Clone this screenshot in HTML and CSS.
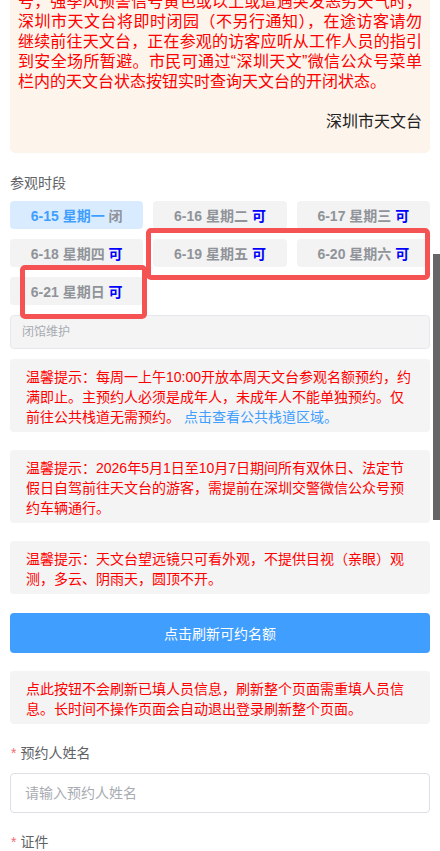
FILE: index.html
```html
<!DOCTYPE html>
<html lang="zh-CN">
<head>
  <meta charset="UTF-8">
  <title>天文台参观预约</title>
  <link rel="stylesheet" href="styles.css">
</head>
<body>
  <div class="page">
    <div class="notice">
      <p class="notice-text">号，强季风预警信号黄色或以上或遭遇突发恶劣天气时，深圳市天文台将即时闭园（不另行通知），在途访客请勿继续前往天文台，正在参观的访客应听从工作人员的指引到安全场所暂避。市民可通过“深圳天文”微信公众号菜单栏内的天文台状态按钮实时查询天文台的开闭状态。</p>
      <p class="notice-sign">深圳市天文台</p>
    </div>

    <div class="field-title">参观时段</div>
    <div class="dates">
      <button class="date active">6-15 星期一 <span class="closed">闭</span></button>
      <button class="date">6-16 星期二 <span class="open">可</span></button>
      <button class="date">6-17 星期三 <span class="open">可</span></button>
      <button class="date">6-18 星期四 <span class="open">可</span></button>
      <button class="date">6-19 星期五 <span class="open">可</span></button>
      <button class="date">6-20 星期六 <span class="open">可</span></button>
      <button class="date">6-21 星期日 <span class="open">可</span></button>
    </div>

    <div class="remark">闭馆维护</div>

    <div class="tip first">温馨提示：每周一上午10:00开放本周天文台参观名额预约，约满即止。主预约人必须是成年人，未成年人不能单独预约。仅前往公共栈道无需预约。 <a class="tip-link" href="#">点击查看公共栈道区域。</a></div>
    <div class="tip">温馨提示：2026年5月1日至10月7日期间所有双休日、法定节假日自驾前往天文台的游客，需提前在深圳交警微信公众号预约车辆通行。</div>
    <div class="tip">温馨提示：天文台望远镜只可看外观，不提供目视（亲眼）观测，多云、阴雨天，圆顶不开。</div>

    <button class="refresh">点击刷新可约名额</button>

    <div class="tip">点此按钮不会刷新已填人员信息，刷新整个页面需重填人员信息。长时间不操作页面会自动退出登录刷新整个页面。</div>

    <div class="form-item">
      <label class="form-label"><span class="req">*</span>预约人姓名</label>
      <input class="form-input" type="text" placeholder="请输入预约人姓名">
    </div>
    <div class="form-item">
      <label class="form-label"><span class="req">*</span>证件</label>
    </div>
  </div>

  <div class="mark mark-week"></div>
  <div class="mark mark-sun"></div>
  <div class="scroll-thumb"></div>
</body>
</html>
```

FILE: styles.css
```css
html {
  overflow: hidden;
}

body {
  margin: 0;
  background: #fff;
  font-family: "Liberation Sans", "Noto Sans CJK SC", sans-serif;
  font-size: 14px;
  color: #606266;
}

.page {
  padding: 0 10px;
}

.notice {
  margin-top: -8px;
  padding: 0 8px 21px;
  background: #fdf5ec;
  border-radius: 0 0 5px 5px;
}

.notice-text {
  margin: 0;
  font-size: 16px;
  line-height: 20px;
  color: #f00;
  text-align: justify;
}

.notice-sign {
  margin: 20px 0 0;
  font-size: 16px;
  line-height: 20px;
  color: #222;
  text-align: right;
}

.field-title {
  margin-top: 20px;
  line-height: 20px;
  color: #606266;
}

.dates {
  display: grid;
  grid-template-columns: repeat(3, 1fr);
  gap: 10px;
  margin-top: 8px;
}

.date {
  height: 28px;
  padding: 0;
  border: none;
  border-radius: 4px;
  background: #f3f3f3;
  font-family: inherit;
  font-size: 14px;
  font-weight: bold;
  color: #909399;
}

.date.active {
  background: #d9ecff;
  color: #409eff;
}

.date .open {
  color: #00f;
}

.date .closed {
  color: #909399;
}

.remark {
  margin-top: 10px;
  height: 32px;
  padding: 0 11px;
  border: 1px solid #e4e7ed;
  border-radius: 4px;
  background: #f4f4f4;
  font-size: 12px;
  line-height: 32px;
  color: #a8abb2;
}

.tip {
  margin-top: 18px;
  padding: 8px 16px 5px;
  border-radius: 4px;
  background: #f4f4f4;
  line-height: 20px;
  color: #f00;
}

.tip.first {
  margin-top: 10px;
}

.tip-link {
  color: #409eff;
  text-decoration: none;
}

.refresh {
  display: block;
  width: 100%;
  height: 40px;
  margin-top: 19px;
  border: none;
  border-radius: 4px;
  background: #409eff;
  color: #fff;
  font-family: inherit;
  font-size: 14px;
}

.form-item {
  margin-top: 19px;
}

.form-label {
  display: block;
  line-height: 20px;
  color: #606266;
}

.req {
  margin: 0 4px 0 1px;
  color: #f56c6c;
}

.form-input {
  display: block;
  box-sizing: border-box;
  width: 100%;
  height: 40px;
  margin-top: 10px;
  padding: 0 14px;
  border: 1px solid #dcdfe6;
  border-radius: 4px;
  font-family: inherit;
  font-size: 14px;
  color: #606266;
}

.form-input::placeholder {
  color: #a8abb2;
}

/* red highlight frames drawn over the date list */
.mark {
  position: absolute;
  box-sizing: border-box;
  border: 5px solid #f55353;
  border-radius: 5px;
}

.mark-week {
  left: 146px;
  top: 228px;
  width: 284px;
  height: 52px;
}

.mark-sun {
  left: 20px;
  top: 265px;
  width: 127px;
  height: 54px;
}

.scroll-thumb {
  position: fixed;
  right: 0;
  top: 254px;
  width: 7px;
  height: 266px;
  background: #666;
}
```
